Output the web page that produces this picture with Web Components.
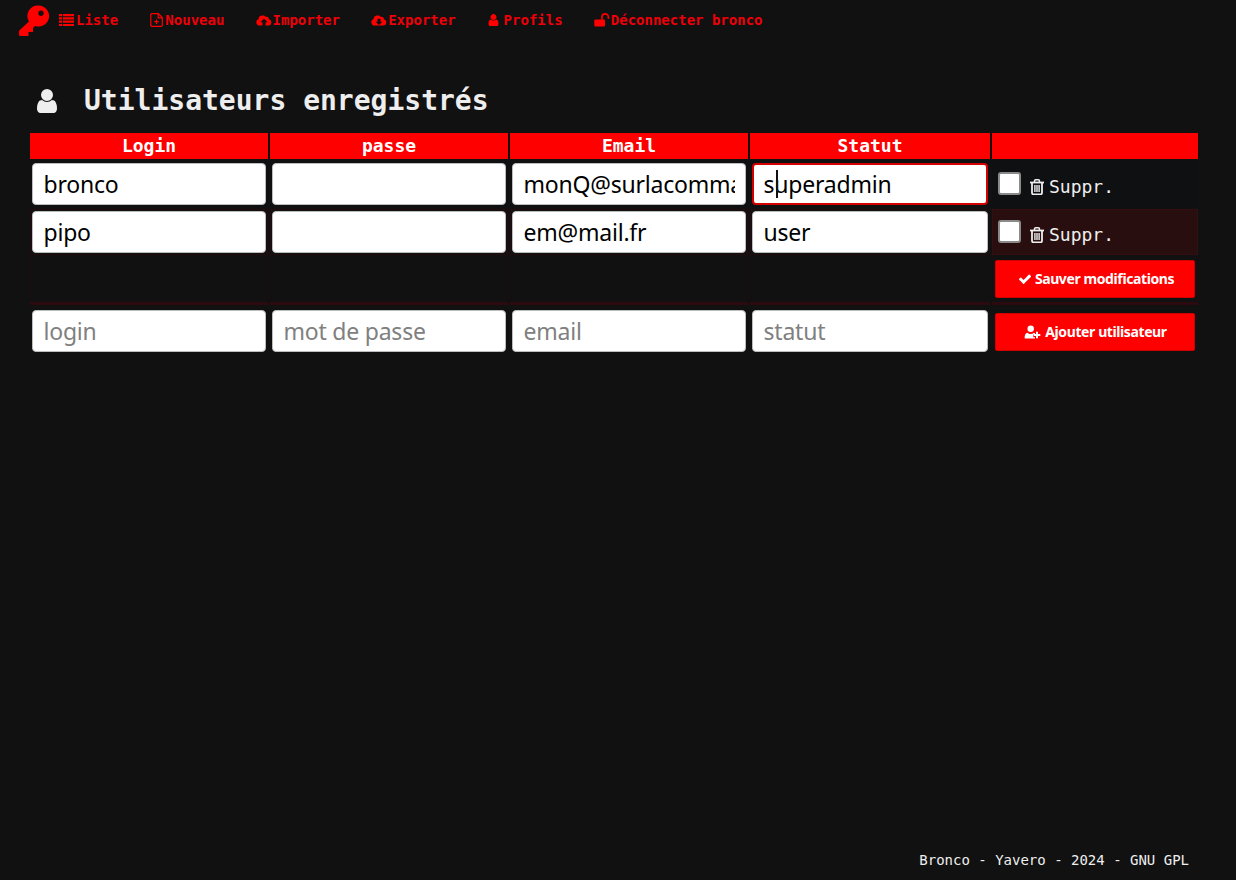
<!DOCTYPE html>
<html lang="fr">
<head>
<meta charset="utf-8">
<title>Utilisateurs enregistrés</title>
<style>
html,body{margin:0;height:100%;background:#111;}
body{font-family:"DejaVu Sans Mono",monospace;color:#eee;}
</style>
</head>
<body>
<app-shell>
  <top-nav slot="nav">
    <nav-link icon="list">Liste</nav-link>
    <nav-link icon="file">Nouveau</nav-link>
    <nav-link icon="up">Importer</nav-link>
    <nav-link icon="down">Exporter</nav-link>
    <nav-link icon="user">Profils</nav-link>
    <nav-link icon="unlock">Déconnecter bronco</nav-link>
  </top-nav>
  <page-title>Utilisateurs enregistrés</page-title>
  <user-table>
    <head-cell>Login</head-cell><head-cell>passe</head-cell><head-cell>Email</head-cell><head-cell>Statut</head-cell><head-cell></head-cell>

    <data-cell tone="a"><text-field value="bronco"></text-field></data-cell>
    <data-cell tone="a"><text-field></text-field></data-cell>
    <data-cell tone="a"><text-field value="monQ@surlacommande.fr"></text-field></data-cell>
    <data-cell tone="a"><text-field value="superadmin" focused></text-field></data-cell>
    <data-cell tone="a"><delete-box></delete-box></data-cell>

    <data-cell tone="b"><text-field value="pipo"></text-field></data-cell>
    <data-cell tone="b"><text-field></text-field></data-cell>
    <data-cell tone="b"><text-field value="em@mail.fr"></text-field></data-cell>
    <data-cell tone="b"><text-field value="user"></text-field></data-cell>
    <data-cell tone="hot"><delete-box></delete-box></data-cell>

    <data-cell tone="c"></data-cell>
    <data-cell tone="c"></data-cell>
    <data-cell tone="c"></data-cell>
    <data-cell tone="c"></data-cell>
    <data-cell tone="c"><red-button icon="check">Sauver modifications</red-button></data-cell>

    <data-cell tone="d"><text-field placeholder="login"></text-field></data-cell>
    <data-cell tone="d"><text-field placeholder="mot de passe"></text-field></data-cell>
    <data-cell tone="d"><text-field placeholder="email"></text-field></data-cell>
    <data-cell tone="d"><text-field placeholder="statut"></text-field></data-cell>
    <data-cell tone="d"><red-button icon="userplus">Ajouter utilisateur</red-button></data-cell>
  </user-table>
  <page-footer slot="footer">Bronco - Yavero - 2024 - GNU GPL</page-footer>
</app-shell>
<script>
const USER='<svg viewBox="0 0 1280 1792" fill="currentColor"><path d="M1280 1399q0 109-62.500 187t-150.500 78h-854q-88 0-150.500-78t-62.500-187q0-85 8.500-160.500t31.500-152 58.500-131 94-89 134.500-34.500q131 128 313 128t313-128q76 0 134.500 34.500t94 89 58.500 131 31.500 152 8.500 160.500zm-256-887q0 159-112.500 271.500t-271.500 112.500-271.500-112.500-112.500-271.500 112.500-271.500 271.500-112.500 271.500 112.500 112.500 271.500z"/></svg>';
const ICONS={
 user:USER,
 list:'<svg viewBox="0 0 16 14" fill="currentColor"><path d="M0 1h3v2.200H0zM4 1h11v2.200H4zM0 4.300h3v2.200H0zM4 4.300h11v2.200H4zM0 7.600h3v2.200H0zM4 7.600h11v2.200H4zM0 10.900h3v2.200H0zM4 10.900h11v2.200H4z"/></svg>',
 file:'<svg viewBox="0 0 14 14" fill="none" stroke="currentColor" stroke-width="1.200"><path d="M1.800.7h6.600l3.900 3.900v7.700a1 1 0 0 1-1 1H1.800a1 1 0 0 1-1-1V1.700a1 1 0 0 1 1-1z"/><path d="M8.200.9v3.900h3.900M6.500 6.500v4.400M4.300 8.700h4.400"/></svg>',
 up:'<svg viewBox="0 0 16 12" fill="currentColor"><path fill-rule="evenodd" d="M3.700 11.500A3.400 3.400 0 0 1 2.600 4.900 3.800 3.800 0 0 1 6.400 1.600a4 4 0 0 1 3.500 1.300 2.500 2.500 0 0 1 3 2.300 3.200 3.200 0 0 1-.4 6.300H9.600V8.300h2.100L8 4.600 4.300 8.300h2.100v3.200z"/></svg>',
 down:'<svg viewBox="0 0 16 12" fill="currentColor"><path fill-rule="evenodd" d="M3.700 11.500A3.400 3.400 0 0 1 2.600 4.900 3.800 3.800 0 0 1 6.400 1.600a4 4 0 0 1 3.500 1.300 2.500 2.500 0 0 1 3 2.300 3.200 3.200 0 0 1-.4 6.300zM6.500 4.800v3H4.600L8 11l3.400-3.200H9.500v-3z"/></svg>',
 unlock:'<svg viewBox="0 0 16 14" fill="currentColor"><path d="M1.300 6.500h8.700a1 1 0 0 1 1 1v5a1 1 0 0 1-1 1H1.300a1 1 0 0 1-1-1v-5a1 1 0 0 1 1-1z"/><path d="M8 6.800V4a3.200 3.200 0 0 1 6.400 0v1.700" fill="none" stroke="currentColor" stroke-width="1.700"/></svg>',
 check:'<svg viewBox="0 0 1792 1792" fill="currentColor"><path d="M1671 566q0 40-28 68l-724 724-136 136q-28 28-68 28t-68-28l-136-136-362-362q-28-28-28-68t28-68l136-136q28-28 68-28t68 28l294 295 656-657q28-28 68-28t68 28l136 136q28 28 28 68z"/></svg>',
 userplus:'<svg viewBox="0 0 16 14" fill="currentColor"><circle cx="6.200" cy="3.800" r="3.200"/><path d="M.2 13.400c-.3-3 .5-5.200 2.600-5.700 1 .9 2.200 1.300 3.400 1.300s2.300-.4 3.300-1.300l1 .6v1.200H8.800v2.800h1.700v1.100z"/><path d="M11.500 6.800h2v2.200h2.300v2h-2.300v2.200h-2V11H9.300V9h2.200z"/></svg>',
 trash:'<svg viewBox="0 0 14 16" fill="none" stroke="currentColor"><path d="M0 3.500h14" stroke-width="1.800"/><path d="M4.500 3.200V2q0-1.200 1.200-1.200h2.600Q9.500.8 9.500 2v1.200" stroke-width="1.500"/><path d="M2 3.500v10.300q0 1.500 1.500 1.500h7q1.500 0 1.500-1.500V3.500" stroke-width="1.800"/><path d="M4.900 6v7M7 6v7M9.100 6v7" stroke-width="1.400"/></svg>'
};
function def(name,html,extra){
  const t=document.createElement('template');t.innerHTML=html;
  customElements.define(name,class extends HTMLElement{
    constructor(){super();this.attachShadow({mode:'open'}).appendChild(t.content.cloneNode(true));}
    connectedCallback(){extra&&extra.call(this,this.shadowRoot);}
  });
}
def('app-shell',`<style>:host{display:flex;flex-direction:column;min-height:880px;box-sizing:border-box}
main{display:block}.f{margin-top:auto}</style>
<slot name="nav"></slot><main><slot></slot></main><div class="f"><slot name="footer"></slot></div>`);
def('top-nav',`<style>:host{display:flex;align-items:flex-start;height:40px;padding-left:18px;box-sizing:border-box}
svg{width:32px;height:32px;margin-top:5px;flex:none;display:block}
.links{display:flex;margin-top:11px;margin-left:9px;gap:31.200px}</style>
<svg viewBox="18 5 32 32"><path fill="#f00" fill-rule="evenodd" d="M38.500 5.500a10.500 10.500 0 1 1-3.400 20.400L33 28v4h-4.500v4h-8q-1.500 0-1.500-1.500v-3.700L29 21.500A10.500 10.500 0 0 1 38.500 5.500zM41 10.500a2.700 2.700 0 1 0 0 5.400 2.700 2.700 0 0 0 0-5.400z"/></svg>
<div class="links"><slot></slot></div>`);
def('nav-link',`<style>:host{display:flex;align-items:center;height:18px;color:#ee0008;font:bold 14px/18px "DejaVu Sans Mono",monospace;white-space:nowrap}
i{display:flex;justify-content:flex-start;width:17px;height:14px;color:#f00}i svg{display:block;height:100%;width:16px}
:host([icon=file]) i{width:16px}:host([icon=file]) svg{width:14px;margin-left:1px}
:host([icon=user]) i{width:16.800px}:host([icon=user]) svg{width:11px;margin-left:1.500px}
:host([icon=unlock]) i{width:17px}
span{display:block}</style><i></i><span><slot></slot></span>`,function(r){r.querySelector('i').innerHTML=ICONS[this.getAttribute('icon')];});
def('page-title',`<style>:host{display:flex;align-items:center;height:93px;box-sizing:border-box;padding:29px 0 0 37px;color:#eee;font:bold 28px/34px "DejaVu Sans Mono",monospace}
i{display:block;width:20px;height:28px;margin-right:27px}i svg{display:block;width:100%;height:100%}
h1{margin:0;font:inherit}</style><i></i><h1><slot></slot></h1>`,function(r){r.querySelector('i').innerHTML=ICONS.user;});
def('user-table',`<style>:host{display:grid;grid-template-columns:238px 238px 238px 240px 206px;grid-template-rows:26px 46px 46px 48px 46px;gap:2px;margin-left:30px;width:1168px}</style><slot></slot>`);
def('head-cell',`<style>:host{display:block;background:#f00;color:#fff;text-align:center;font:bold 18px/25px "DejaVu Sans Mono",monospace}</style><slot></slot>`);
def('data-cell',`<style>:host{display:flex;align-items:stretch;box-sizing:border-box;padding:2px;min-width:0}
:host([tone=a]){background:#0f1012}
:host([tone=b]){box-shadow:inset 0 0 0 1px #220b0d}
:host([tone=hot]){background:#280e0e;box-shadow:inset 0 0 0 1px #340f12}
:host([tone=c]){box-shadow:inset 1px 0 0 #170c0e,inset -1px 0 0 #170c0e;border-bottom:3px solid #2c0a0f;padding:3px 3px 2px}
:host([tone=d]){padding-top:3px;padding-bottom:1px}
:host([tone=d]:last-child){padding:6px 3px 2px}
</style><slot></slot>`);
def('text-field',`<style>:host{display:block;position:relative;flex:1;min-width:0;height:42px}
input{display:block;box-sizing:border-box;width:100%;height:42px;margin:0;padding:0 10.500px 0;border:1px solid #bdbdbd;border-radius:4px;background:#fff;color:#000;font:23px "Noto Sans",sans-serif;letter-spacing:-.22px;outline:none}
input::placeholder{color:#808080;opacity:1}
:host([focused]) input{border:2px solid #d40000;padding:0 9.500px 0}
b{position:absolute;left:24px;top:7px;width:2px;height:28px;background:#111;display:none}
:host([focused]) b{display:block}</style><input type="text"><b></b>`,function(r){const i=r.querySelector('input');
 if(this.hasAttribute('value'))i.setAttribute('value',this.getAttribute('value'));
 if(this.hasAttribute('placeholder'))i.placeholder=this.getAttribute('placeholder');});
def('delete-box',`<style>:host{display:flex;align-items:center;padding:0 0 0 4px;color:#eee;font:18px/24px "DejaVu Sans Mono",monospace;white-space:nowrap}
input{appearance:none;box-sizing:border-box;width:23px;height:23px;margin:-1px 9px 0 0;background:#fff;border:2px solid #8a8a8a;border-radius:3px}
i{display:block;width:14px;height:16px;margin:5px 5px 0 0}i svg{display:block;width:100%;height:100%}
span{padding-top:5px}</style><input type="checkbox"><i></i><span><slot></slot></span>`,function(r){r.querySelector('i').innerHTML=ICONS.trash;if(!this.textContent)this.textContent='Suppr.';});
def('red-button',`<style>:host{display:flex;flex:1;align-items:center;justify-content:center;height:38px;box-sizing:border-box;background:#f00;border:1px solid #d00000;border-radius:2px;color:#fff;font:bold 14px "Noto Sans",sans-serif;letter-spacing:-.4px;white-space:nowrap;padding:0 0 1px 2px}
i{display:block;width:14px;height:14px;margin-right:3px}i svg{display:block;width:100%;height:100%}
:host([icon=userplus]){padding-left:1px}
:host([icon=userplus]) i{width:17px;height:14px;margin-right:4px}</style><i></i><slot></slot>`,function(r){r.querySelector('i').innerHTML=ICONS[this.getAttribute('icon')];});
def('page-footer',`<style>:host{display:block;height:40px;box-sizing:border-box;padding:11px 47px 0 0;text-align:right;color:#eee;font:14px/18px "DejaVu Sans Mono",monospace}</style><slot></slot>`);
</script>
</body>
</html>
